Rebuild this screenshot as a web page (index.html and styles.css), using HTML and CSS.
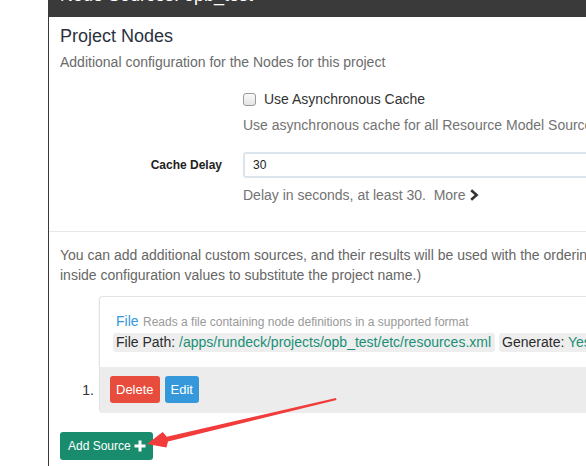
FILE: index.html
```html
<!DOCTYPE html>
<html>
<head>
<meta charset="utf-8">
<link rel="stylesheet" href="styles.css">
</head>
<body>
<div class="page">
  <div class="gutter"></div>
  <div class="modal">
    <div class="modal-header"><h4 class="modal-title">Node Sources: opb_test</h4></div>
    <div class="modal-body">
      <h3 class="title">Project Nodes</h3>
      <p class="subtitle">Additional configuration for the Nodes for this project</p>
      <div class="form-row">
        <div class="label"></div>
        <div class="field">
          <label class="check"><span class="checkbox"></span>Use Asynchronous Cache</label>
          <div class="help help-first">Use asynchronous cache for all Resource Model Sources</div>
        </div>
      </div>
      <div class="form-row row-delay">
        <div class="label bold">Cache Delay</div>
        <div class="field">
          <div class="input">30</div>
          <div class="help help-delay">Delay in seconds, at least 30.&nbsp; More <svg class="chev" width="10" height="12" viewBox="0 0 10 12"><path d="M2.2 1.2 L7.6 6 L2.2 10.8" fill="none" stroke="#333" stroke-width="2.6"/></svg></div>
        </div>
      </div>
    </div>
    <div class="divider"></div>
    <div class="modal-body2">
      <p class="para">You can add additional custom sources, and their results will be used with the ordering shown below. (You can use ${project.name}<br>inside configuration values to substitute the project name.)</p>
      <div class="sources">
        <div class="card-body">
          <div class="src-head"><span class="src-name">File</span> <span class="src-desc">Reads a file containing node definitions in a supported format</span></div>
          <div class="props"><span class="prop">File Path: <span class="val">/apps/rundeck/projects/opb_test/etc/resources.xml</span></span><span class="prop">Generate: <span class="val">Yes</span></span></div>
        </div>
        <div class="num">1.</div>
        <div class="card-foot">
          <span class="btn btn-red">Delete</span>
          <span class="btn btn-blue">Edit</span>
        </div>
      </div>
      <div class="btn btn-green add">Add Source <svg width="12" height="12" viewBox="0 0 12 12"><path d="M4.5 0.5h3v4h4v3h-4v4h-3v-4h-4v-3h4z" fill="#fff"/></svg></div>
    </div>
  </div>
</div>
<svg class="arrow" width="586" height="466" viewBox="0 0 586 466"><polygon points="147,444 162.7,432 166.8,436.7 336,398 336.5,400 168,441.5 166.4,447.6" fill="#f23b3b"/></svg>
</body>
</html>
```

FILE: styles.css
```css
html, body {
  margin: 0;
  padding: 0;
  width: 586px;
  height: 466px;
  overflow: hidden;
  background: #fff;
  font-family: "Liberation Sans", Arial, sans-serif;
  color: #333;
}
.page {
  display: flex;
  width: 900px;
  height: 466px;
}
.gutter {
  width: 48px;
  flex: none;
}
.modal {
  flex: none;
  width: 840px;
  border-left: 1px solid #3a3a3a;
  position: relative;
}
.modal-header {
  height: 17px;
  background: #3a3a3a;
  overflow: hidden;
  padding-left: 11px;
}
.modal-title {
  margin: -15px 0 0;
  font-size: 18px;
  line-height: 20px;
  font-weight: normal;
  color: #fff;
}
.modal-body {
  padding: 8px 11px 0;
}
.title {
  margin: 0;
  font-size: 18px;
  line-height: 22px;
  font-weight: normal;
  color: #2c3140;
}
.subtitle {
  margin: 6px 0 0;
  font-size: 14px;
  line-height: 18px;
  color: #6b6b6b;
}
.form-row {
  display: grid;
  grid-template-columns: 168px 1fr;
  column-gap: 15px;
}
.label {
  text-align: right;
  padding-right: 6px;
  font-size: 12px;
}
.bold { font-weight: bold; color: #222; line-height: 26px; }
.check {
  display: flex;
  align-items: center;
  margin-top: 18px;
  font-size: 14px;
  line-height: 20px;
  color: #333;
}
.checkbox {
  width: 11px;
  height: 11px;
  border: 1px solid #9a9a9a;
  border-radius: 3px;
  background: linear-gradient(#fafafa, #e4e4e4);
  margin-right: 8px;
}
.help {
  font-size: 14px;
  line-height: 20px;
  color: #737373;
}
.help-first { margin-top: 6px; }
.row-delay { margin-top: 17px; }
.input {
  height: 22px;
  border: 2px solid #dce4ec;
  border-radius: 3px;
  padding: 0 8px;
  font-size: 12px;
  line-height: 22px;
  color: #222;
}
.help-delay {
  margin-top: 7px;
  display: flex;
  align-items: center;
}
.chev { margin-left: 3px; }
.divider {
  height: 1px;
  background: #e8e8e8;
  margin-top: 26px;
}
.modal-body2 {
  padding: 13px 11px 0;
}
.para {
  margin: 0;
  font-size: 14px;
  line-height: 20px;
  color: #666;
  white-space: nowrap;
}
.sources {
  margin-top: 11px;
  display: grid;
  grid-template-columns: 39px 1fr;
}
.card-body {
  grid-column: 2;
  grid-row: 1;
  border: 1px solid #e3e3e3;
  border-bottom: none;
  border-radius: 4px 0 0 0;
  padding: 15px 0 15px 13px;
  box-shadow: -1px 0 2px rgba(0,0,0,0.04);
}
.src-head {
  margin-left: 3px;
  line-height: 18px;
  white-space: nowrap;
}
.src-name { font-size: 14px; color: #3498db; }
.src-desc { font-size: 12px; color: #999; }
.props {
  margin-top: 2px;
  display: flex;
  gap: 4px;
  white-space: nowrap;
}
.prop {
  background: #eee;
  border-radius: 3px;
  padding: 0 4px 0 3px;
  font-size: 14px;
  line-height: 19px;
  color: #2c2c2c;
}
.val { color: #1a8f76; }
.num {
  grid-column: 1;
  grid-row: 2;
  align-self: center;
  text-align: right;
  padding-right: 5px;
  font-size: 14px;
  color: #3a2f3a;
}
.card-foot {
  grid-column: 2;
  grid-row: 2;
  background: #ececec;
  border-left: 1px solid #e3e3e3;
  border-radius: 0 0 0 4px;
  padding: 9px 0 10px 10px;
  display: flex;
  gap: 5px;
}
.btn {
  display: inline-flex;
  align-items: center;
  height: 27px;
  padding: 0 6px;
  border-radius: 3px;
  font-size: 13px;
  color: #fff;
  box-sizing: border-box;
}
.btn-red { background: #e74c3c; }
.btn-blue { background: #3498db; }
.btn-green { background: #1a8c6e; }
.add {
  margin-top: 19px;
  height: 28px;
  padding: 0 7px 0 8px;
  gap: 3px;
  font-size: 12px;
}
.arrow {
  position: absolute;
  left: 0;
  top: 0;
  pointer-events: none;
}
```
